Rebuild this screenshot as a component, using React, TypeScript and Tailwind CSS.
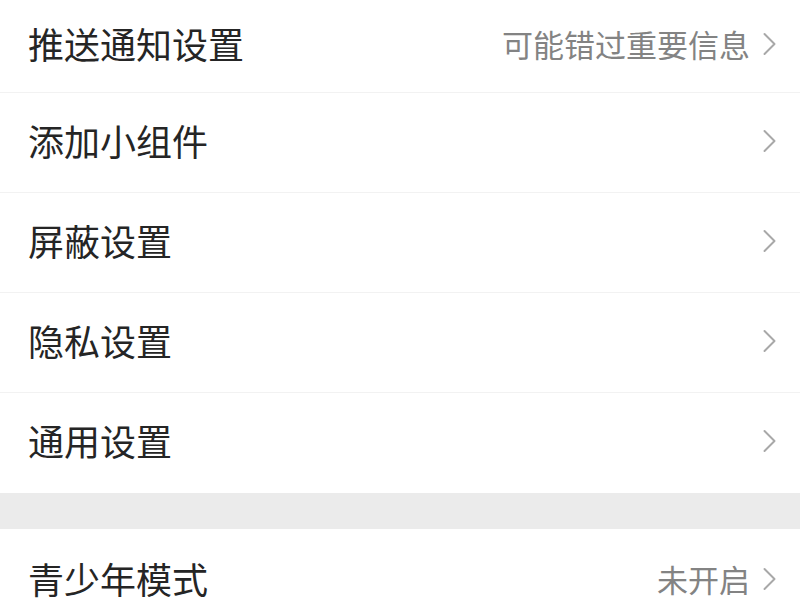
import React from "react";

const Chevron = () => (
  <svg width="15" height="24" viewBox="0 0 15 24" fill="none" className="shrink-0">
    <path d="M2.5 2 L12.5 12 L2.5 22" stroke="#a8a8a8" strokeWidth="2" strokeLinecap="round" strokeLinejoin="round" />
  </svg>
);

const Row = ({ label, value, h, last }: { label: string; value?: string; h: string; last?: boolean }) => (
  <div className={`flex items-center justify-between pl-[28px] pr-[23px] bg-white ${h} ${last ? "" : "border-b border-[#f2f2f2]"}`}>
    <span className="text-[36px] leading-none text-[#252525] pb-[6px]">{label}</span>
    <div className="flex items-center gap-[12px] pb-[4px]">
      {value && <span className="text-[31px] leading-none text-[#838383] pb-[2px]">{value}</span>}
      <Chevron />
    </div>
  </div>
);

export default function App() {
  return (
    <div
      className="w-[800px] h-[600px] overflow-hidden bg-white flex flex-col"
      style={{ fontFamily: '"Noto Sans CJK SC", "Noto Sans", sans-serif' }}
    >
      <Row label="推送通知设置" value="可能错过重要信息" h="h-[93px] shrink-0" />
      <Row label="添加小组件" h="h-[100px] shrink-0" />
      <Row label="屏蔽设置" h="h-[100px] shrink-0" />
      <Row label="隐私设置" h="h-[100px] shrink-0" />
      <Row label="通用设置" h="h-[100px] shrink-0" last />
      <div className="h-[36px] shrink-0 bg-[#ebebeb]" />
      <Row label="青少年模式" value="未开启" h="h-[104px] shrink-0" last />
    </div>
  );
}
